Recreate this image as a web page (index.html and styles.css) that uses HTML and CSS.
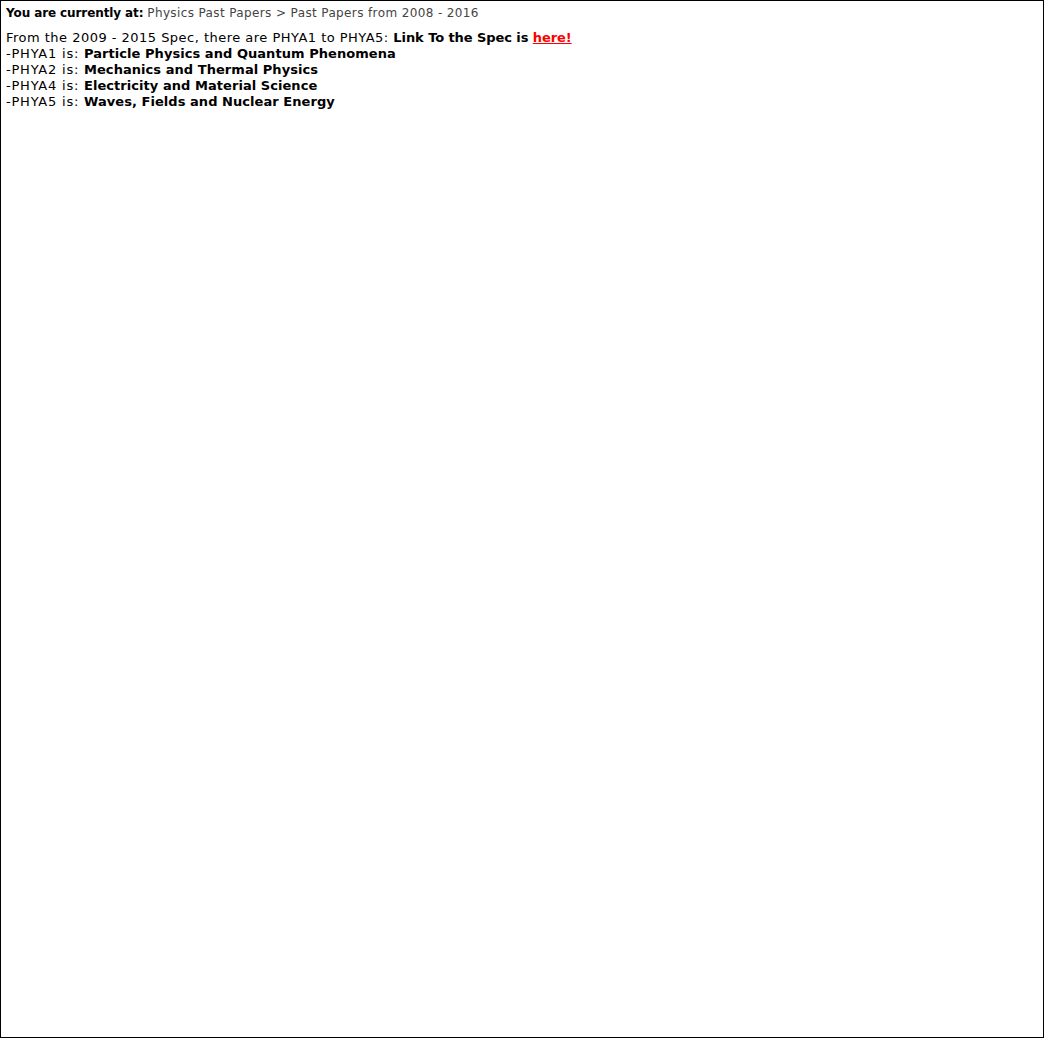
FILE: index.html
```html
<!DOCTYPE html>
<html>
<head>
<meta charset="utf-8">
<link rel="stylesheet" href="styles.css">
</head>
<body>
<div class="page">
  <div class="crumbs"><b class="label">You are currently at:</b> <span class="trail">Physics Past Papers &gt; Past Papers from 2008 - 2016</span></div>
  <div class="content">
    <span class="intro">From the 2009 - 2015 Spec, there are PHYA1 to PHYA5: </span><b class="linkline">Link To the Spec is <a href="#" class="speclink">here!</a></b><br>
    <span class="code">-PHYA1 is: </span><b>Particle Physics and Quantum Phenomena</b><br>
    <span class="code">-PHYA2 is: </span><b>Mechanics and Thermal Physics</b><br>
    <span class="code">-PHYA4 is: </span><b>Electricity and Material Science</b><br>
    <span class="code">-PHYA5 is: </span><b>Waves, Fields and Nuclear Energy</b>
  </div>
</div>
</body>
</html>
```

FILE: styles.css
```css
html, body {
  margin: 0;
  padding: 0;
  background: #fff;
}
.page {
  box-sizing: border-box;
  width: 1044px;
  height: 1038px;
  border: 1px solid #000;
  padding: 4px 5px;
  font-family: "DejaVu Sans", Verdana, sans-serif;
  color: #000;
}
.crumbs {
  font-size: 12px;
  line-height: 16px;
}
.label {
  letter-spacing: -0.1px;
}
.trail {
  color: #444;
  letter-spacing: 0.38px;
}
.content {
  margin-top: 9px;
  font-size: 13px;
  line-height: 16px;
}
.intro {
  letter-spacing: 0.48px;
}
.code {
  letter-spacing: 0.78px;
}
.content b {
  letter-spacing: 0.05px;
}
.content b.linkline {
  letter-spacing: -0.08px;
}
.speclink {
  color: #f00;
}
```
